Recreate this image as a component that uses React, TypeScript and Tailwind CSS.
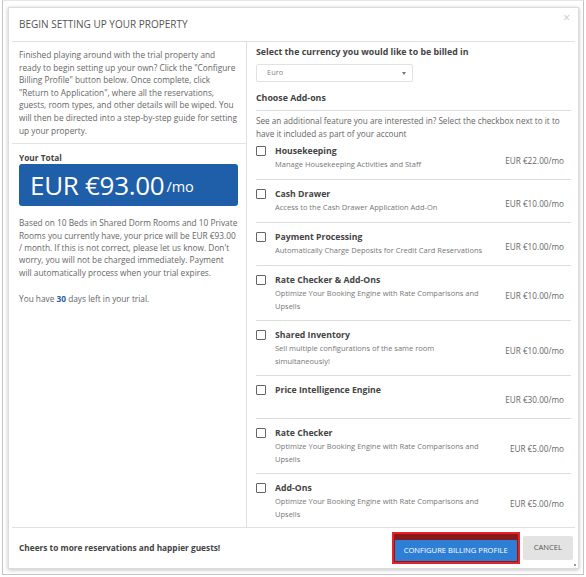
const addons = [
  { name: 'Housekeeping', desc: ['Manage Housekeeping Activities and Staff'], price: 'EUR €22.00/mo' },
  { name: 'Cash Drawer', desc: ['Access to the Cash Drawer Application Add-On'], price: 'EUR €10.00/mo' },
  { name: 'Payment Processing', desc: ['Automatically Charge Deposits for Credit Card Reservations'], price: 'EUR €10.00/mo' },
  { name: 'Rate Checker & Add-Ons', desc: ['Optimize Your Booking Engine with Rate Comparisons and', 'Upsells'], price: 'EUR €10.00/mo' },
  { name: 'Shared Inventory', desc: ['Sell multiple configurations of the same room', 'simultaneously!'], price: 'EUR €10.00/mo' },
  { name: 'Price Intelligence Engine', desc: [''], price: 'EUR €30.00/mo' },
  { name: 'Rate Checker', desc: ['Optimize Your Booking Engine with Rate Comparisons and', 'Upsells'], price: 'EUR €5.00/mo' },
  { name: 'Add-Ons', desc: ['Optimize Your Booking Engine with Rate Comparisons and', 'Upsells'], price: 'EUR €5.00/mo' },
]

export default function App() {
  return (
    <div
      className="w-[586px] h-[577px] bg-white overflow-hidden"
      style={{ fontFamily: '"Open Sans", "Noto Sans", sans-serif' }}
    >
      <div className="ml-[2px] w-[582px] h-[575px] border border-[#c4c4c4] border-t-[#e6e6e6] pl-[5px] pr-[4px] pt-[6px]">
        {/* modal */}
        <div className="w-[571px] h-[562px] bg-white border border-[#dcdcdc] shadow-[0_1px_4px_rgba(0,0,0,0.25)] px-[3px] flex flex-col relative">
          {/* header */}
          <div className="h-[34px] border-b border-[#e0e0e0] flex items-center pl-[7px] pr-[3px] shrink-0">
            <h2 className="text-[10px] text-[#555] uppercase mt-[-1px]">Begin setting up your property</h2>
            <button className="ml-auto text-[#c8c8c8] text-[12px] leading-none mt-[-14px] mr-[2px]">×</button>
          </div>

          {/* body */}
          <div className="flex flex-1 min-h-0 border-b border-[#e0e0e0]">
            {/* left */}
            <div className="w-[235px] border-r border-[#e0e0e0] shrink-0">
              <div className="pl-[7px] pr-[8px] pt-[7px] pb-[6px] border-b border-[#e3e3e3]">
                <p className="text-[8.3px] leading-[12.6px] text-[#666]">
                  Finished playing around with the trial property and ready to begin setting up your own? Click the "Configure Billing Profile" button below. Once complete, click "Return to Application", where all the reservations, guests, room types, and other details will be wiped. You will then be directed into a step-by-step guide for setting up your property.
                </p>
              </div>
              <div className="pl-[7px] pr-[8px] pt-[8px]">
                <div className="text-[8.3px] leading-[12px] font-bold text-[#444]">Your Total</div>
                <div className="h-[42px] rounded-[3px] bg-[#1f5ea8] flex items-center pl-[11px] text-white">
                  <span className="text-[26px] leading-none tracking-[-0.3px]">EUR €93.00</span>
                  <span className="text-[14.5px] leading-none ml-[2px] mt-[5px]">/mo</span>
                </div>
                <p className="mt-[11px] text-[8.3px] leading-[12.4px] text-[#666]">
                  Based on 10 Beds in Shared Dorm Rooms and 10 Private Rooms you currently have, your price will be EUR €93.00 / month. If this is not correct, please let us know. Don't worry, you will not be charged immediately. Payment will automatically process when your trial expires.
                </p>
                <p className="mt-[14px] text-[8.3px] leading-[12.4px] text-[#666]">
                  You have <span className="font-bold text-[#1f5ea8]">30</span> days left in your trial.
                </p>
              </div>
            </div>

            {/* right */}
            <div className="flex-1 pl-[9px] pr-[4px] pt-[4px] overflow-hidden">
              <div className="text-[8.8px] leading-[12px] font-bold text-[#444]">Select the currency you would like to be billed in</div>
              <div className="mt-[6px] w-[157px] h-[18px] border border-[#e2e2e2] rounded-[2px] flex items-center pl-[10px] pr-[6px]">
                <span className="text-[7.5px] text-[#888]">Euro</span>
                <span className="ml-auto w-0 h-0 border-l-[2.5px] border-r-[2.5px] border-t-[3.5px] border-l-transparent border-r-transparent border-t-[#777]" />
              </div>
              <div className="mt-[10px] pb-[6px] border-b border-[#dcdcdc] text-[8.8px] leading-[12px] font-bold text-[#444]">Choose Add-ons</div>
              <p className="mt-[4px] text-[8.2px] leading-[12.6px] text-[#666]">
                See an additional feature you are interested in? Select the checkbox next to it to have it included as part of your account
              </p>
              <div>
                {addons.map((a, i) => (
                  <div
                    key={a.name}
                    className={`flex items-start pb-[8px] ${i === 0 ? 'pt-[4px]' : 'pt-[7px]'} ${i < addons.length - 1 ? 'border-b border-[#dcdcdc]' : ''}`}
                  >
                    <span className="mt-[2px] w-[10px] h-[10px] border-[1.5px] border-[#666] rounded-[1px] bg-white shrink-0" />
                    <div className="ml-[9px]">
                      <div className="text-[8.7px] leading-[14px] font-bold text-[#444]">{a.name}</div>
                      {a.desc.map((line, j) => (
                        <div
                          key={j}
                          className={`text-[7.5px] text-[#777] whitespace-nowrap ${j === 0 ? 'leading-[13px] h-[13px]' : 'leading-[12px] h-[12px]'}`}
                        >
                          {line}
                        </div>
                      ))}
                    </div>
                    <div className="ml-auto self-center mt-[6px] pr-[7px] text-[8.2px] text-[#666] whitespace-nowrap">{a.price}</div>
                  </div>
                ))}
              </div>
            </div>
          </div>

          {/* footer */}
          <div className="h-[40px] shrink-0 flex items-center pl-[7px] pr-[2px]">
            <span className="text-[8.3px] font-bold text-[#444]">Cheers to more reservations and happier guests!</span>
            <div className="ml-auto flex items-center gap-[3px]">
              <div className="border-2 border-[#e5232a] p-[1px] bg-[#8a1a1a]">
                <button className="h-[21px] px-[9px] bg-[#2d7fd6] text-white text-[7.6px] uppercase whitespace-nowrap">
                  Configure billing profile
                </button>
              </div>
              <button className="h-[24px] px-[11px] bg-[#e3e3e3] text-[#555] text-[7.6px] uppercase rounded-[2px]">Cancel</button>
            </div>
          </div>
          <span className="absolute right-[2px] bottom-[2px] w-[2px] h-[2px] bg-[#999]" />
        </div>
      </div>
    </div>
  )
}
